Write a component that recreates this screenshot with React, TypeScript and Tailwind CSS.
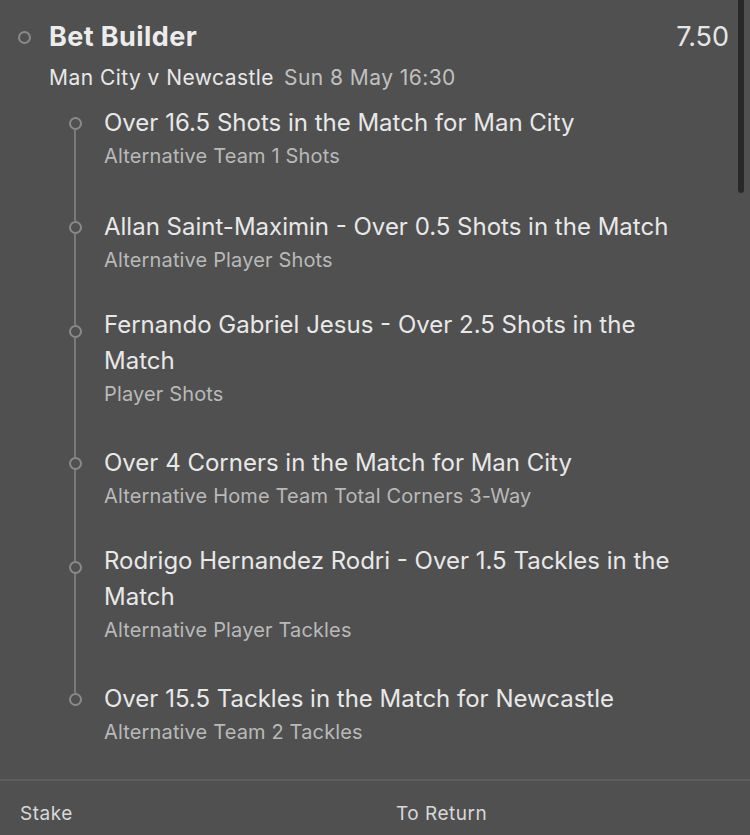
import React from 'react'

type Leg = { title: string[]; market: string }

const legs: Leg[] = [
  { title: ['Over 16.5 Shots in the Match for Man City'], market: 'Alternative Team 1 Shots' },
  { title: ['Allan Saint-Maximin - Over 0.5 Shots in the Match'], market: 'Alternative Player Shots' },
  { title: ['Fernando Gabriel Jesus - Over 2.5 Shots in the', 'Match'], market: 'Player Shots' },
  { title: ['Over 4 Corners in the Match for Man City'], market: 'Alternative Home Team Total Corners 3-Way' },
  { title: ['Rodrigo Hernandez Rodri - Over 1.5 Tackles in the', 'Match'], market: 'Alternative Player Tackles' },
  { title: ['Over 15.5 Tackles in the Match for Newcastle'], market: 'Alternative Team 2 Tackles' },
]

function LegRow({ leg, first, last }: { leg: Leg; first: boolean; last: boolean }) {
  const wrapped = leg.title.length > 1
  return (
    <div className="flex">
      {/* timeline rail */}
      <div className="flex w-[20px] flex-col items-center">
        <div className={`h-[12px] w-[2px] ${first ? '' : 'bg-[#7a7a7a]'}`} />
        <div className="h-[13px] w-[13px] shrink-0 rounded-full border-2 border-[#8a8a8a]" />
        <div className={`w-[2px] flex-1 ${last ? '' : 'bg-[#7a7a7a]'}`} />
      </div>
      <div className={`ml-[19px] ${wrapped ? '-mt-[6px] pb-[36px]' : 'pb-[38px]'} ${last ? '!pb-[10px]' : ''}`}>
        {leg.title.map((line) => (
          <div key={line} className="text-[24px] leading-[36px] text-[#e8e8e8]">
            {line}
          </div>
        ))}
        <div className="text-[20px] leading-[30px] tracking-[0.15px] text-[#b9b9b9]">{leg.market}</div>
      </div>
    </div>
  )
}

export default function App() {
  return (
    <div className="relative flex h-[835px] w-[750px] flex-col overflow-hidden bg-[#505050] font-['Inter',sans-serif]">
      <div className="absolute right-[6px] top-0 h-[193px] w-[6px] rounded-b-full bg-[#282828]" />

      <div className="flex-1 pl-[18px] pr-[21px] pt-[18px]">
        <div className="flex items-center">
          <div className="h-[13px] w-[13px] rounded-full border-2 border-[#8a8a8a]" />
          <div className="ml-[18px] text-[27px] font-bold leading-[38px] tracking-[0.4px] text-[#ececec]">
            Bet Builder
          </div>
          <div className="ml-auto text-[27px] leading-[38px] text-[#e6e6e6]">7.50</div>
        </div>
        <div className="ml-[31px] mt-[7px] flex items-baseline text-[21px] leading-[30px] tracking-[0.45px]">
          <span className="text-[#e8e8e8]">Man City v Newcastle</span>
          <span className="ml-[10px] text-[#c0c0c0]">Sun 8 May 16:30</span>
        </div>

        <div className="ml-[47px] mt-[12px]">
          {legs.map((leg, i) => (
            <LegRow key={i} leg={leg} first={i === 0} last={i === legs.length - 1} />
          ))}
        </div>
      </div>

      <div className="flex h-[56px] shrink-0 border-t-2 border-[#5e5e5e] pt-[20px] text-[19px] leading-[26px] tracking-[0.5px] text-[#d8d8d8]">
        <div className="w-[396px] pl-[20px]">Stake</div>
        <div>To Return</div>
      </div>
    </div>
  )
}
